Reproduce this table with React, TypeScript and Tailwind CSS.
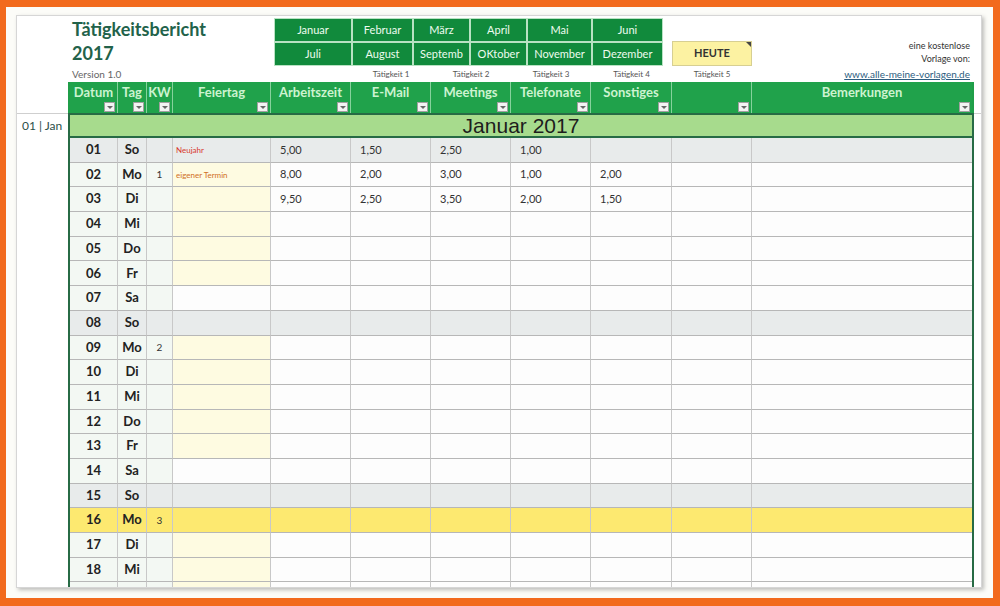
import React from "react";

type Kind = "day" | "sat" | "sun" | "today";

type Row = {
  d: string;
  t: string;
  kind: Kind;
  kw?: string;
  note?: string;
  noteColor?: string;
  vals?: string[];
};

const colW = [
  "w-[48px]",
  "w-[29px]",
  "w-[26px]",
  "w-[98px]",
  "w-[80px]",
  "w-[80px]",
  "w-[80px]",
  "w-[80px]",
  "w-[81px]",
  "w-[80px]",
  "w-[220px]",
];

const headers = [
  "Datum",
  "Tag",
  "KW",
  "Feiertag",
  "Arbeitszeit",
  "E-Mail",
  "Meetings",
  "Telefonate",
  "Sonstiges",
  "",
  "Bemerkungen",
];

const months = [
  "Januar",
  "Februar",
  "März",
  "April",
  "Mai",
  "Juni",
  "Juli",
  "August",
  "Septemb",
  "OKtober",
  "November",
  "Dezember",
];
const monthW = ["w-[78px]", "w-[61px]", "w-[57px]", "w-[57px]", "w-[65px]", "w-[71px]"];

const rows: Row[] = [
  { d: "01", t: "So", kind: "sun", note: "Neujahr", noteColor: "text-[#d8382e]", vals: ["5,00", "1,50", "2,50", "1,00", ""] },
  { d: "02", t: "Mo", kind: "day", kw: "1", note: "eigener Termin", noteColor: "text-[#d0701f]", vals: ["8,00", "2,00", "3,00", "1,00", "2,00"] },
  { d: "03", t: "Di", kind: "day", vals: ["9,50", "2,50", "3,50", "2,00", "1,50"] },
  { d: "04", t: "Mi", kind: "day" },
  { d: "05", t: "Do", kind: "day" },
  { d: "06", t: "Fr", kind: "day" },
  { d: "07", t: "Sa", kind: "sat" },
  { d: "08", t: "So", kind: "sun" },
  { d: "09", t: "Mo", kind: "day", kw: "2" },
  { d: "10", t: "Di", kind: "day" },
  { d: "11", t: "Mi", kind: "day" },
  { d: "12", t: "Do", kind: "day" },
  { d: "13", t: "Fr", kind: "day" },
  { d: "14", t: "Sa", kind: "sat" },
  { d: "15", t: "So", kind: "sun" },
  { d: "16", t: "Mo", kind: "today", kw: "3" },
  { d: "17", t: "Di", kind: "day" },
  { d: "18", t: "Mi", kind: "day" },
  // partly hidden by the card edge, shown without text
  { d: "", t: "", kind: "day" },
];

function cellBg(kind: Kind, i: number) {
  if (kind === "sun") return "bg-[#e8ebeb]";
  if (kind === "today") return "bg-[#fde970]";
  if (i <= 2) return "bg-[#f3f8f3]";
  if (i === 3 && kind === "day") return "bg-[#fefbe1]";
  return "bg-[#fdfdfd]";
}

function FilterButton() {
  return (
    <span className="flex h-[10px] w-[11px] items-center justify-center border border-[#a0a0a0] bg-[#f3f3f3]">
      <span className="h-0 w-0 border-l-[3px] border-r-[3px] border-t-[3px] border-l-transparent border-r-transparent border-t-[#666]" />
    </span>
  );
}

export default function App() {
  return (
    <div className="h-[606px] w-[1000px] overflow-hidden bg-[#f26a1d] pb-[8px] pl-[6px] pr-[7px] pt-[7px] font-['Lato',sans-serif]">
      <div className="h-full w-full bg-[#fcfcf8] pl-[10px] pt-[8px]">
        <div className="h-[573px] w-[966px] overflow-hidden border border-[#d6d6d6] bg-white shadow-[2px_2px_4px_rgba(0,0,0,0.25)]">
          {/* top area */}
          <div className="flex h-[50px]">
            <div className="w-[51px]" />
            <div className="w-[206px] pl-[4px] pt-[1px] text-[18px] font-bold leading-[24px] text-[#22624a]">
              <div>Tätigkeitsbericht</div>
              <div>2017</div>
            </div>
            <div className="mt-[2px] flex h-[48px] w-[389px] flex-col bg-[#118a3c]">
              {[0, 1].map((r) => (
                <div key={r} className="flex h-[24px]">
                  {monthW.map((w, c) => (
                    <div
                      key={c}
                      className={`${w} flex items-center justify-center border border-[#b9e2c3] text-[11px] text-[#eefcef]`}
                    >
                      {months[r * 6 + c]}
                    </div>
                  ))}
                </div>
              ))}
            </div>
            <div className="w-[9px]" />
            <div className="relative flex h-[25px] w-[80px] items-center justify-center self-end border border-[#d7cf92] bg-[#fcf2a2] text-[11px] font-bold text-[#333]">
              HEUTE
              <span className="absolute right-0 top-0 h-0 w-0 border-l-[5px] border-t-[5px] border-l-transparent border-t-[#444]" />
            </div>
            <div className="flex flex-1 flex-col items-end justify-end pr-[11px] pb-[1px] text-[9px] leading-[13px] text-[#333]">
              <div>eine kostenlose</div>
              <div>Vorlage von:</div>
            </div>
          </div>

          {/* info row */}
          <div className="flex h-[16px] items-center text-[8px] text-[#555]">
            <div className="w-[53px]" />
            {colW.map((w, i) => (
              <div key={i} className={`${w} whitespace-nowrap`}>
                {i === 0 && <span className="pl-[2px] text-[10px] text-[#666]">Version 1.0</span>}
                {i >= 5 && i <= 9 && <div className="text-center">Tätigkeit {i - 4}</div>}
                {i === 10 && (
                  <div className="pr-[2px] text-right text-[10px] text-[#2c5d80] underline">
                    www.alle-meine-vorlagen.de
                  </div>
                )}
              </div>
            ))}
          </div>

          {/* header row */}
          <div className="flex h-[31px]">
            <div className="w-[51px]" />
            <div className="flex border-l-2 border-r-2 border-[#1f9e48] bg-[#20a24b]">
              {headers.map((h, i) => (
                <div
                  key={i}
                  className={`${colW[i]} flex flex-col items-center border-r border-[#86d29c] pt-[2px] last:border-r-0`}
                >
                  <div className="h-[16px] whitespace-nowrap text-[13px] font-bold leading-[16px] text-[#cdf3d0]">
                    {h}
                  </div>
                  <div className="mt-[2px] self-end pr-[2px]">
                    <FilterButton />
                  </div>
                </div>
              ))}
            </div>
          </div>

          {/* month title row */}
          <div className="flex h-[25px]">
            <div className="flex w-[51px] items-start border-t border-[#cfcfcf] pl-[5px] pt-[3px] text-[12px] text-[#2d4f4a]">
              01 | Jan
            </div>
            <div className="flex w-[906px] items-center justify-center border-2 border-[#276b45] bg-[#a7db8d] font-['Liberation_Sans',sans-serif] text-[21px] leading-none text-[#1d1d1d]">
              Januar 2017
            </div>
            <div className="flex-1 border-t border-[#cfcfcf]" />
          </div>

          {/* data rows */}
          {rows.map((r, idx) => (
            <div key={idx} className="flex h-[24.7px]">
              <div className="w-[51px]" />
              <div className="flex border-l-2 border-r-2 border-[#276b45]">
                {colW.map((w, i) => {
                  let content: React.ReactNode = null;
                  let cls = "";
                  if (i === 0) {
                    content = r.d;
                    cls = "justify-center text-[13px] font-bold text-[#222]";
                  } else if (i === 1) {
                    content = r.t;
                    cls = "justify-center text-[13px] font-bold text-[#222]";
                  } else if (i === 2) {
                    content = r.kw;
                    cls = "justify-center text-[10px] text-[#333]";
                  } else if (i === 3) {
                    content = r.note;
                    cls = `pl-[3px] text-[8px] ${r.noteColor ?? ""}`;
                  } else if (i >= 4 && i <= 8) {
                    content = r.vals?.[i - 4];
                    cls = "pl-[9px] text-[11px] text-[#333]";
                  }
                  return (
                    <div
                      key={i}
                      className={`${w} ${cellBg(r.kind, i)} ${cls} flex items-center border-b border-r border-b-[#b7b7b7] border-r-[#c8c8c8] last:border-r-0`}
                    >
                      {content}
                    </div>
                  );
                })}
              </div>
            </div>
          ))}
        </div>
      </div>
    </div>
  );
}
